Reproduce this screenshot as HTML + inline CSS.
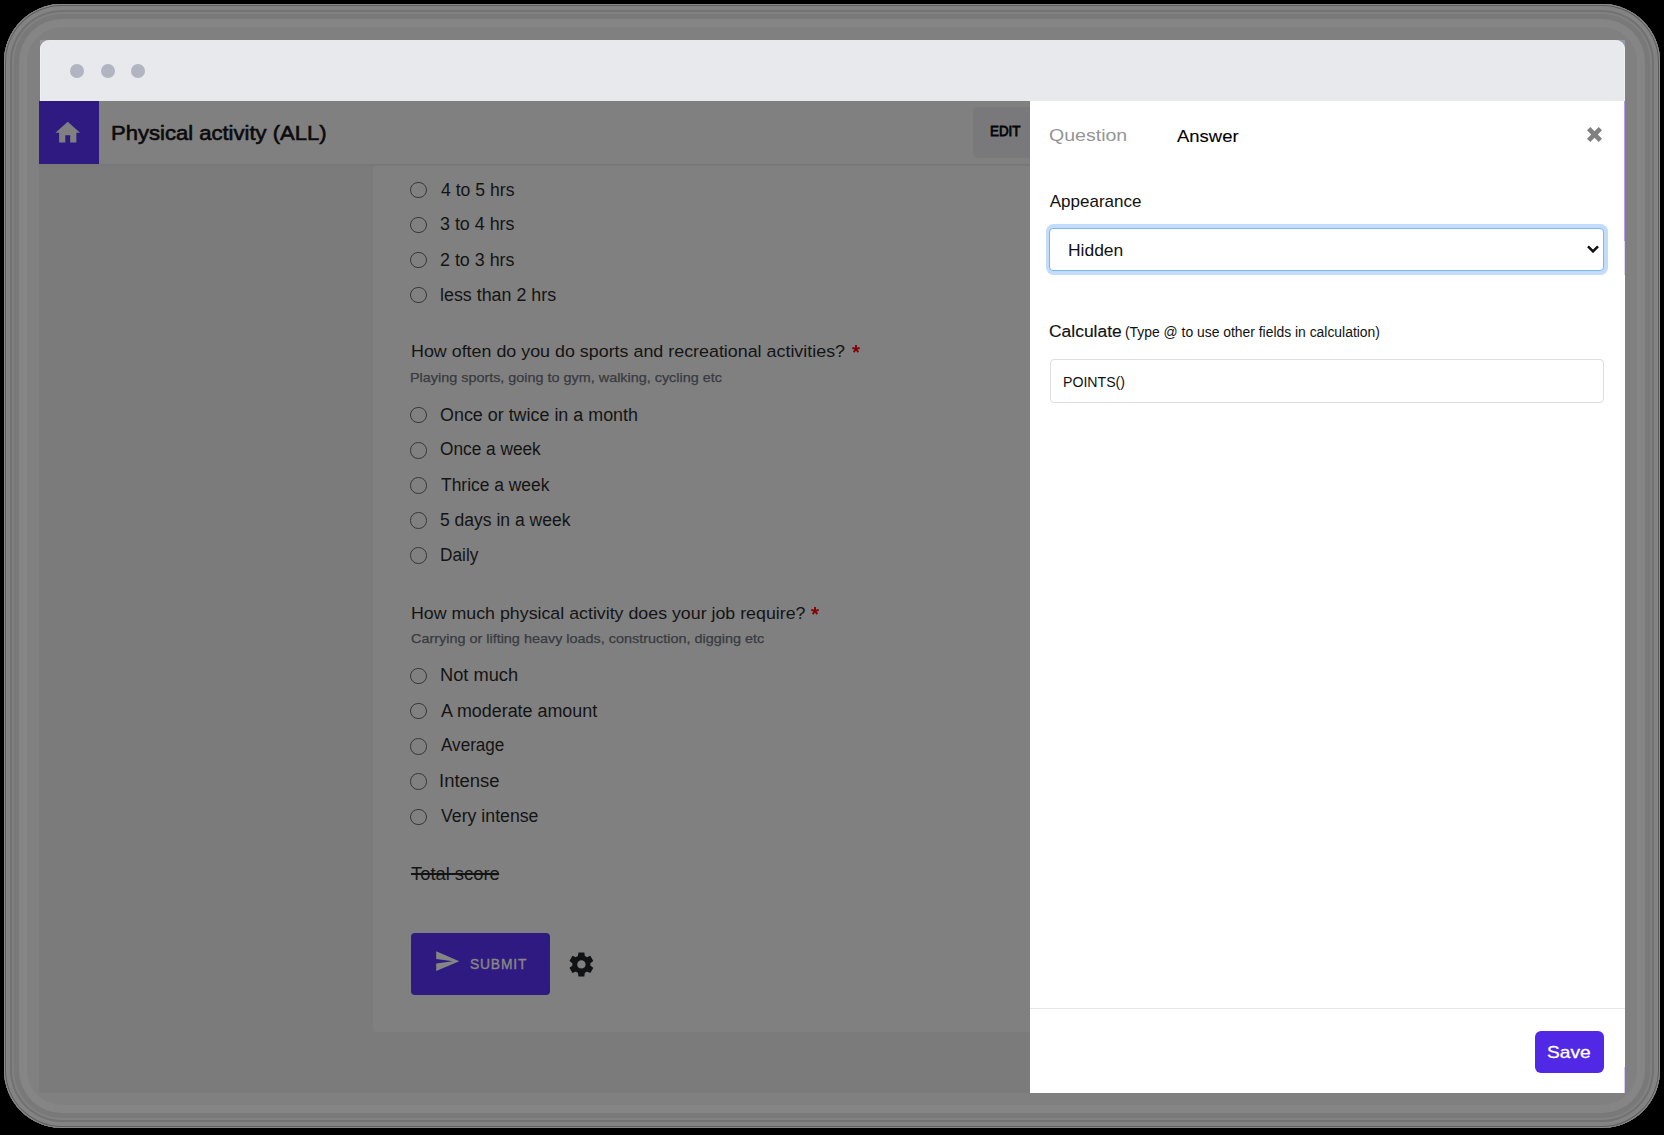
<!DOCTYPE html>
<html><head><meta charset="utf-8"><style>
html,body{margin:0;padding:0;}
body{width:1664px;height:1135px;background:#000;position:relative;overflow:hidden;font-family:"Liberation Sans",sans-serif;}
div{position:absolute;box-sizing:border-box;}
.t{white-space:pre;transform-origin:0 0;}
.rd{left:410.35px;width:16.5px;height:16.5px;border-radius:50%;border:1.5px solid #383838;}
</style></head><body>
<div style="left:4px;top:4px;width:1656px;height:1124px;border-radius:58px;background:#808080;box-shadow:inset 0 0 0 1px #8a8a8a, inset 0 0 0 2px #5e5e5e, inset 0 0 0 6px #838383, inset 0 0 0 8px #727272, inset 0 0 0 10px #818181, inset 0 0 0 15px #797979, inset 0 0 0 23px #858585;"></div>
<div style="left:40px;top:40px;width:9px;height:9px;background:#989ca5;"></div><div style="left:1616px;top:40px;width:9px;height:9px;background:#989ca5;"></div><div style="left:40px;top:40px;width:1585px;height:61px;background:#e8e9ed;border-radius:9.5px 9.5px 0 0;box-shadow:inset 1px 0 0 #eff0f3, inset -1px 0 0 #eff0f3;"></div>
<div style="left:70px;top:64px;width:14px;height:14px;border-radius:50%;background:#b1b5c1;"></div>
<div style="left:100.5px;top:64px;width:14px;height:14px;border-radius:50%;background:#b1b5c1;"></div>
<div style="left:131px;top:64px;width:14px;height:14px;border-radius:50%;background:#b1b5c1;"></div>
<div style="left:39px;top:101px;width:991px;height:992px;background:#7b7b7b;"></div>
<div style="left:39px;top:101px;width:991px;height:65px;background:#808080;border-bottom:2px solid #787878;"></div>
<div style="left:39px;top:101px;width:60px;height:63px;background:#2e1a80;"></div>
<svg style="position:absolute;left:52.85px;top:117.5px" width="29.5" height="29.5" viewBox="0 0 24 24"><path d="M10 20v-6h4v6h5v-8h3L12 3 2 12h3v8z" fill="#808080"/></svg>
<div style="left:972.6px;top:107.4px;width:80px;height:50.6px;border-radius:5px;background:#79797b;"></div>
<div style="left:373px;top:166px;width:700px;height:865.5px;background:#808080;border-radius:0 0 4px 4px;"></div>
<div class="rd" style="top:181.65px"></div><div class="rd" style="top:216.75px"></div><div class="rd" style="top:251.85px"></div><div class="rd" style="top:286.95px"></div><div class="rd" style="top:406.95px"></div><div class="rd" style="top:442.03px"></div><div class="rd" style="top:477.11px"></div><div class="rd" style="top:512.19px"></div><div class="rd" style="top:547.27px"></div><div class="rd" style="top:667.75px"></div><div class="rd" style="top:702.95px"></div><div class="rd" style="top:738.15px"></div><div class="rd" style="top:773.35px"></div><div class="rd" style="top:808.55px"></div>
<svg style="position:absolute;left:849.80px;top:342.60px" width="12" height="12" viewBox="0 0 12 12"><g stroke="#860303" stroke-width="1.9" stroke-linecap="butt"><line x1="6" y1="6" x2="6.00" y2="2.10"/><line x1="6" y1="6" x2="2.29" y2="4.79"/><line x1="6" y1="6" x2="9.71" y2="4.79"/><line x1="6" y1="6" x2="3.71" y2="9.16"/><line x1="6" y1="6" x2="8.29" y2="9.16"/></g></svg><svg style="position:absolute;left:808.50px;top:604.50px" width="12" height="12" viewBox="0 0 12 12"><g stroke="#860303" stroke-width="1.9" stroke-linecap="butt"><line x1="6" y1="6" x2="6.00" y2="2.10"/><line x1="6" y1="6" x2="2.29" y2="4.79"/><line x1="6" y1="6" x2="9.71" y2="4.79"/><line x1="6" y1="6" x2="3.71" y2="9.16"/><line x1="6" y1="6" x2="8.29" y2="9.16"/></g></svg>
<div style="left:411px;top:873.4px;width:87.7px;height:1.3px;background:#141414;"></div>
<div style="left:410.8px;top:933px;width:139.5px;height:61.7px;border-radius:4px;background:#2e1a80;"></div>
<svg style="position:absolute;left:433.7px;top:947.9px" width="26.4" height="26.4" viewBox="0 0 24 24"><path d="M2.01 21L23 12 2.01 3 2 10l15 2-15 2z" fill="#858585"/></svg>
<svg style="position:absolute;left:567.4px;top:949.5px" width="28.8" height="28.8" viewBox="0 0 24 24"><path d="M19.44 12.99l-.01.02c.04-.33.08-.67.08-1.01 0-.34-.03-.66-.07-.99l.01.02 2.44-1.92-2.43-4.22-2.87 1.16.01.01c-.52-.4-1.09-.74-1.71-.99h.01L14.44 2h-4.88l-.47 3.07h.01c-.62.25-1.19.59-1.71.99l.01-.01-2.88-1.17-2.44 4.22 2.43 1.92.01-.02c-.04.33-.07.65-.07.99 0 .34.03.68.08 1.01l-.01-.02-2.1 1.65-.33.26 2.43 4.2 2.88-1.15-.02-.04c.53.41 1.1.75 1.73 1.01h-.03L9.58 22h4.85s.03-.18.06-.42l.38-2.650h-.01c.62-.25 1.2-.59 1.73-1.01l-.02.04 2.88 1.15 2.43-4.2s-.14-.12-.33-.26l-2.11-1.66zM12 15.5c-1.930 0-3.5-1.57-3.5-3.5s1.57-3.5 3.5-3.5 3.5 1.57 3.5 3.5-1.57 3.5-3.5 3.5z" fill="#111214"/></svg>
<div style="left:1030px;top:101px;width:595px;height:992px;background:#fff;"></div>
<div style="left:1624px;top:101px;width:1px;height:140px;background:#b99cf0;"></div><div style="left:1624px;top:241px;width:1px;height:34px;background:#e3d6fa;"></div><div style="left:1624px;top:1067px;width:1px;height:26px;background:#d9c8f7;"></div>
<svg style="position:absolute;left:1587px;top:127.2px" width="15" height="15" viewBox="0 0 15 15"><path d="M0.00 3.30 L3.30 0.00 L7.50 4.20 L11.70 0.00 L15.00 3.30 L10.80 7.50 L15.00 11.70 L11.70 15.00 L7.50 10.80 L3.30 15.00 L0.00 11.70 L4.20 7.50Z" fill="#808080"/></svg>
<div style="left:1045.6px;top:224px;width:562.4px;height:51px;border-radius:7.5px;background:#c3dcfb;"></div>
<div style="left:1049.4px;top:227.5px;width:554.6px;height:43.5px;border-radius:4px;background:#fff;border:1.6px solid #7cb4fb;"></div>
<svg style="position:absolute;left:1587px;top:245px" width="12" height="8" viewBox="0 0 12 8"><path d="M1 1.4 L6 6.4 L11 1.4" fill="none" stroke="#111" stroke-width="2.5"/></svg>
<div style="left:1049.75px;top:359.4px;width:554.25px;height:43.6px;border-radius:4px;background:#fff;border:1px solid #dedede;"></div>
<div style="left:1030px;top:1008px;width:595px;height:1px;background:#e6e6e6;"></div>
<div style="left:1535px;top:1031px;width:69px;height:42px;border-radius:6px;background:#5128e6;"></div>
<div class="t" style="left:111.03px;top:118.13px;font-size:20.5px;line-height:29px;font-weight:400;color:#0b0b0b;transform:scaleX(1.0749);-webkit-text-stroke:0.6px currentColor;">Physical activity (ALL)</div><div class="t" style="left:990.25px;top:121.30px;font-size:14.0px;line-height:20px;font-weight:400;color:#050505;transform:scaleX(0.9548);-webkit-text-stroke:0.8px currentColor;">EDIT</div><div class="t" style="left:440.60px;top:178.20px;font-size:18px;line-height:25px;font-weight:400;color:#141414;transform:scaleX(0.9787);">4 to 5 hrs</div><div class="t" style="left:439.61px;top:212.20px;font-size:18px;line-height:25px;font-weight:400;color:#141414;transform:scaleX(0.9919);">3 to 4 hrs</div><div class="t" style="left:439.61px;top:248.20px;font-size:18px;line-height:25px;font-weight:400;color:#141414;transform:scaleX(0.9919);">2 to 3 hrs</div><div class="t" style="left:439.61px;top:283.20px;font-size:18px;line-height:25px;font-weight:400;color:#141414;transform:scaleX(0.9914);">less than 2 hrs</div><div class="t" style="left:410.95px;top:340.21px;font-size:17.1px;line-height:24px;font-weight:400;color:#141414;transform:scaleX(1.0452);">How often do you do sports and recreational activities?</div><div class="t" style="left:409.89px;top:368.95px;font-size:13px;line-height:18px;font-weight:400;color:#383b41;transform:scaleX(1.1068);-webkit-text-stroke:0.25px currentColor;">Playing sports, going to gym, walking, cycling etc</div><div class="t" style="left:439.61px;top:402.70px;font-size:18px;line-height:25px;font-weight:400;color:#141414;transform:scaleX(0.9944);">Once or twice in a month</div><div class="t" style="left:439.64px;top:437.20px;font-size:18px;line-height:25px;font-weight:400;color:#141414;transform:scaleX(0.9587);">Once a week</div><div class="t" style="left:440.60px;top:473.20px;font-size:18px;line-height:25px;font-weight:400;color:#141414;transform:scaleX(0.9679);">Thrice a week</div><div class="t" style="left:439.63px;top:508.20px;font-size:18px;line-height:25px;font-weight:400;color:#141414;transform:scaleX(0.9729);">5 days in a week</div><div class="t" style="left:439.64px;top:543.20px;font-size:18px;line-height:25px;font-weight:400;color:#141414;transform:scaleX(0.9590);">Daily</div><div class="t" style="left:410.96px;top:601.81px;font-size:17.1px;line-height:24px;font-weight:400;color:#141414;transform:scaleX(1.0405);">How much physical activity does your job require?</div><div class="t" style="left:411.00px;top:629.95px;font-size:13px;line-height:18px;font-weight:400;color:#383b41;transform:scaleX(1.1082);-webkit-text-stroke:0.25px currentColor;">Carrying or lifting heavy loads, construction, digging etc</div><div class="t" style="left:439.59px;top:663.20px;font-size:18px;line-height:25px;font-weight:400;color:#141414;transform:scaleX(1.0133);">Not much</div><div class="t" style="left:440.60px;top:699.20px;font-size:18px;line-height:25px;font-weight:400;color:#141414;transform:scaleX(0.9943);">A moderate amount</div><div class="t" style="left:440.60px;top:733.20px;font-size:18px;line-height:25px;font-weight:400;color:#141414;transform:scaleX(0.9500);">Average</div><div class="t" style="left:438.55px;top:769.20px;font-size:18px;line-height:25px;font-weight:400;color:#141414;transform:scaleX(1.0250);">Intense</div><div class="t" style="left:440.60px;top:804.20px;font-size:18px;line-height:25px;font-weight:400;color:#141414;transform:scaleX(0.9837);">Very intense</div><div class="t" style="left:411.00px;top:862.27px;font-size:17.8px;line-height:25px;font-weight:400;color:#141414;transform:scaleX(1.0318);">Total score</div><div class="t" style="left:470.30px;top:952.81px;font-size:15.4px;line-height:22px;font-weight:400;color:#868686;transform:scaleX(0.9000);-webkit-text-stroke:0.45px currentColor;letter-spacing:0.9px;">SUBMIT</div><div class="t" style="left:1048.85px;top:123.95px;font-size:17px;line-height:24px;font-weight:400;color:#959595;transform:scaleX(1.1500);">Question</div><div class="t" style="left:1177.10px;top:124.75px;font-size:17px;line-height:24px;font-weight:400;color:#000;transform:scaleX(1.0860);-webkit-text-stroke:0.1px currentColor;">Answer</div><div class="t" style="left:1049.75px;top:189.95px;font-size:17px;line-height:24px;font-weight:400;color:#111;">Appearance</div><div class="t" style="left:1067.72px;top:238.55px;font-size:17px;line-height:24px;font-weight:400;color:#111;transform:scaleX(1.0260);">Hidden</div><div class="t" style="left:1048.99px;top:318.88px;font-size:17.2px;line-height:24px;font-weight:400;color:#111;transform:scaleX(1.0143);-webkit-text-stroke:0.15px currentColor;">Calculate</div><div class="t" style="left:1125.01px;top:322.00px;font-size:14px;line-height:20px;font-weight:400;color:#111;transform:scaleX(0.9918);">(Type @ to use other fields in calculation)</div><div class="t" style="left:1062.81px;top:370.50px;font-size:15px;line-height:21px;font-weight:400;color:#111;transform:scaleX(0.9414);">POINTS()</div><div class="t" style="left:1547.28px;top:1040.85px;font-size:17.0px;line-height:24px;font-weight:400;color:#fff;transform:scaleX(1.1243);-webkit-text-stroke:0.3px currentColor;">Save</div>
</body></html>
